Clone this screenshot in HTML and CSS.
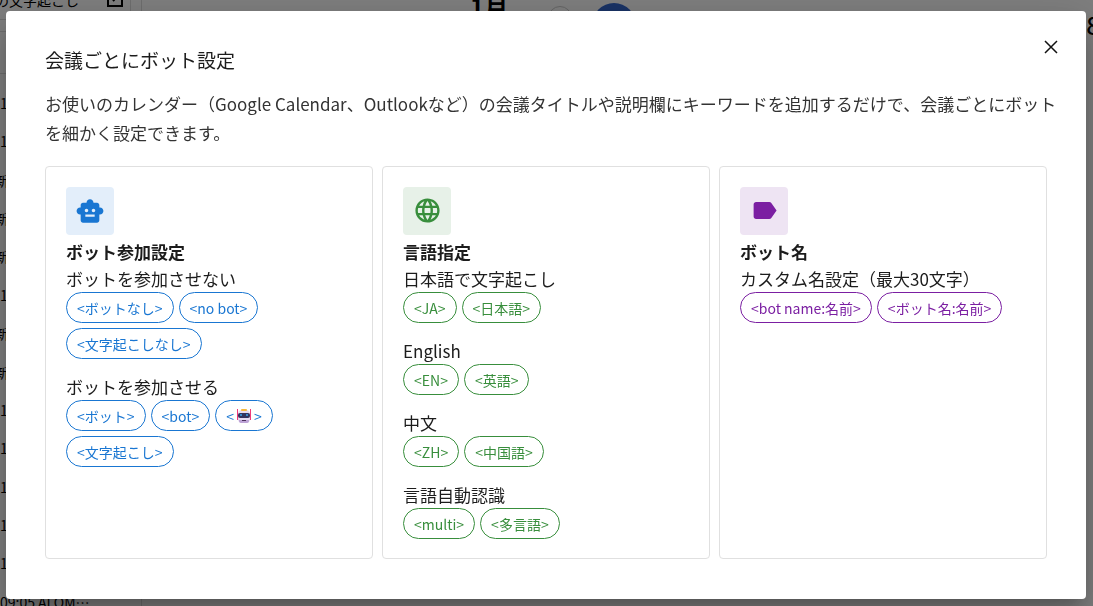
FILE: index.html
```html
<!DOCTYPE html>
<html lang="ja">
<head>
    <meta charset="UTF-8">
    <meta name="viewport" content="width=device-width, initial-scale=1.0">
    <title>会議ごとにボット設定</title>
    <link rel="stylesheet" href="styles.css">
</head>
<body>

<div class="page" aria-hidden="true">
    <aside class="sidebar">
        <div class="sidebar-head">
            <span>の文字起こし</span>
            <svg class="launch" width="16" height="16" viewBox="0 0 16 16"><path d="M8 1H1v14h14V8M6 10l8-9" fill="none" stroke="#000" stroke-width="2"/></svg>
        </div>
        <div class="sidebar-tools"></div>
        <ul class="events">
            <li class="time">1</li>
            <li class="time">1</li>
            <li>新</li>
            <li>新</li>
            <li>新</li>
            <li class="time">1</li>
            <li>新</li>
            <li>新</li>
            <li class="time">1</li>
            <li class="time">1</li>
            <li class="time">1</li>
            <li class="time">1</li>
            <li class="time">1</li>
            <li class="time">09:05 AI OM⋯</li>
        </ul>
    </aside>
    <div class="calendar">
        <div class="month">1月</div>
        <div class="nav-circle"></div>
        <div class="today"></div>
        <div class="day">8</div>
    </div>
</div>

<div class="backdrop">
    <div class="dialog" role="dialog" aria-modal="true" aria-labelledby="dialogTitle">
        <button type="button" class="close" aria-label="閉じる">
            <svg width="14" height="14" viewBox="0 0 14 14"><path d="M1 1l12 12M13 1L1 13" stroke="#111" stroke-width="1.5"/></svg>
        </button>
        <h2 class="title" id="dialogTitle">会議ごとにボット設定</h2>
        <p class="description">お使いのカレンダー（Google Calendar、Outlookなど）の会議タイトルや説明欄にキーワードを追加するだけで、会議ごとにボットを細かく設定できます。</p>

        <div class="cards">
            <section class="card blue">
                <div class="icon">
                    <svg width="28" height="28" viewBox="0 0 24 24"><path fill="currentColor" d="M20.500 9H20V7c0-1.100-.9-2-2-2h-3c0-1.660-1.340-3-3-3S9 3.340 9 5H6c-1.100 0-2 .9-2 2v2h-.5C1.840 9 .5 10.340.5 12s1.340 3 3 3H4v5c0 1.100.9 2 2 2h12c1.100 0 2-.9 2-2v-5h.5c1.660 0 3-1.340 3-3s-1.340-3-3-3zM7.500 11.500c0-.830.670-1.500 1.500-1.500s1.500.670 1.500 1.500S9.830 13 9 13s-1.500-.670-1.500-1.500zM16 17H8v-2h8v2zm-1-4c-.830 0-1.500-.670-1.500-1.500S14.170 10 15 10s1.500.670 1.500 1.500S15.830 13 15 13z"/></svg>
                </div>
                <h3 class="name">ボット参加設定</h3>
                <div class="group">
                    <p class="label">ボットを参加させない</p>
                    <div class="chips">
                        <span class="chip">&lt;ボットなし&gt;</span>
                        <span class="chip">&lt;no bot&gt;</span>
                        <span class="chip">&lt;文字起こしなし&gt;</span>
                    </div>
                </div>
                <div class="group">
                    <p class="label">ボットを参加させる</p>
                    <div class="chips">
                        <span class="chip">&lt;ボット&gt;</span>
                        <span class="chip">&lt;bot&gt;</span>
                        <span class="chip">&lt;<svg class="robot" width="20" height="16" viewBox="0 0 20 16">
                            <path fill="#f0387a" d="M3 1h1v4h1v7H3zM16 1h1v11h-2V5h1z"/>
                            <rect x="4" y="2" width="12" height="13" rx="4" fill="#e6dcf2"/>
                            <path fill="#bda3d6" d="M5 12h10v1q0 2-3 2H8q-3 0-3-2z"/>
                            <rect x="7" y="1" width="6" height="2" rx="1" fill="#f5b93d"/>
                            <rect x="4" y="5" width="12" height="5" rx="2" fill="#33335e"/>
                            <circle cx="7" cy="7" r="1" fill="#38a4ee"/>
                            <circle cx="13" cy="7" r="1" fill="#38a4ee"/>
                            <rect x="8" y="12" width="4" height="1" fill="#4d315c"/>
                        </svg>&gt;</span>
                        <span class="chip">&lt;文字起こし&gt;</span>
                    </div>
                </div>
            </section>

            <section class="card green">
                <div class="icon">
                    <svg width="29" height="29" viewBox="0 0 24 24"><path fill="currentColor" d="M11.990 2C6.470 2 2 6.480 2 12s4.470 10 9.990 10C17.520 22 22 17.520 22 12S17.520 2 11.990 2zm6.930 6h-2.950c-.320-1.250-.780-2.450-1.380-3.560 1.840.630 3.370 1.910 4.330 3.560zM12 4.040c.830 1.200 1.480 2.530 1.910 3.960h-3.820c.430-1.430 1.080-2.760 1.910-3.960zM4.260 14C4.100 13.360 4 12.690 4 12s.1-1.360.260-2h3.380c-.080.660-.140 1.320-.140 2s.060 1.340.140 2H4.260zm.820 2h2.950c.320 1.250.780 2.450 1.380 3.560-1.840-.630-3.370-1.900-4.330-3.560zm2.950-8H5.080c.960-1.660 2.490-2.930 4.330-3.560C8.810 5.550 8.350 6.750 8.030 8zM12 19.960c-.830-1.200-1.480-2.530-1.910-3.960h3.820c-.430 1.430-1.080 2.760-1.910 3.960zM14.340 14H9.660c-.090-.660-.160-1.320-.160-2s.070-1.350.160-2h4.680c.090.650.160 1.320.160 2s-.070 1.340-.160 2zm.250 5.560c.6-1.110 1.060-2.310 1.380-3.560h2.950c-.960 1.650-2.490 2.930-4.330 3.560zM16.360 14c.080-.660.140-1.320.140-2s-.060-1.340-.140-2h3.380c.160.640.260 1.310.260 2s-.1 1.360-.260 2h-3.380z"/></svg>
                </div>
                <h3 class="name">言語指定</h3>
                <div class="group">
                    <p class="label">日本語で文字起こし</p>
                    <div class="chips">
                        <span class="chip">&lt;JA&gt;</span>
                        <span class="chip">&lt;日本語&gt;</span>
                    </div>
                </div>
                <div class="group">
                    <p class="label">English</p>
                    <div class="chips">
                        <span class="chip">&lt;EN&gt;</span>
                        <span class="chip">&lt;英語&gt;</span>
                    </div>
                </div>
                <div class="group">
                    <p class="label">中文</p>
                    <div class="chips">
                        <span class="chip">&lt;ZH&gt;</span>
                        <span class="chip">&lt;中国語&gt;</span>
                    </div>
                </div>
                <div class="group">
                    <p class="label">言語自動認識</p>
                    <div class="chips">
                        <span class="chip">&lt;multi&gt;</span>
                        <span class="chip">&lt;多言語&gt;</span>
                    </div>
                </div>
            </section>

            <section class="card purple">
                <div class="icon">
                    <svg width="29" height="29" viewBox="0 0 24 24"><path fill="currentColor" d="M17.630 5.840C17.270 5.330 16.670 5 16 5L5 5.010C3.900 5.010 3 5.900 3 7v10c0 1.100.9 1.990 2 1.990L16 19c.670 0 1.270-.330 1.630-.840L22 12l-4.370-6.160z"/></svg>
                </div>
                <h3 class="name">ボット名</h3>
                <div class="group">
                    <p class="label">カスタム名設定（最大30文字）</p>
                    <div class="chips">
                        <span class="chip">&lt;bot name:名前&gt;</span>
                        <span class="chip">&lt;ボット名:名前&gt;</span>
                    </div>
                </div>
            </section>
        </div>
    </div>
</div>

</body>
</html>
```
FILE: styles.css
```css
* {
    box-sizing: border-box;
}
body {
    margin: 0;
    height: 100vh;
    overflow: hidden;
    font-family: "Noto Sans CJK JP", sans-serif;
    color: #1c1c1c;
    background-color: #fff;
}
h2, h3, p, ul {
    margin: 0;
    padding: 0;
}

/* calendar page behind the dialog */
.page {
    display: flex;
    height: 100vh;
    overflow: hidden;
    color: #000;
    font-size: 14px;
}
.sidebar {
    flex: none;
    width: 147px;
    margin-left: -5px;
    border-right: 1px solid #ddd;
}
.sidebar-head {
    display: flex;
    justify-content: space-between;
    align-items: center;
    width: 136px;
    height: 40px;
    margin-top: -20px;
    padding-right: 7px;
    border-right: 1px solid #ddd;
    border-bottom: 1px solid #ddd;
}
.launch {
    margin-bottom: 2px;
}
.sidebar-tools {
    height: 43px;
    margin-top: 11px;
    border-top: 1px solid #ddd;
    border-bottom: 1px solid #ddd;
}
.events {
    display: flex;
    flex-direction: column;
    height: 537px;
    margin-top: 10px;
    list-style: none;
}
.events li {
    flex: 1;
    line-height: 38px;
    white-space: nowrap;
}
.events .time {
    padding-left: 5px;
}
.calendar {
    flex: 1;
    display: flex;
    align-items: flex-start;
}
.month {
    margin-left: 328px;
    margin-top: -12px;
    font-size: 24px;
    font-weight: bold;
}
.nav-circle {
    width: 24px;
    height: 24px;
    margin-top: 6px;
    margin-left: 40px;
    border: 1px solid #ccc;
    border-radius: 50%;
}
.today {
    width: 44px;
    height: 44px;
    margin-top: 3px;
    margin-left: 20px;
    border-radius: 50%;
    background-color: #3366cc;
}
.day {
    margin-left: auto;
    margin-right: -7px;
    padding-top: 7px;
    font-size: 24px;
    font-weight: 500;
}

/* dialog */
.backdrop {
    position: fixed;
    inset: 0;
    padding: 11px 7px 7px 6px;
    background-color: rgba(0, 0, 0, 0.5);
}
.dialog {
    position: relative;
    padding: 33px 39px 40px;
    border-radius: 4px;
    background-color: #fff;
    box-shadow: 0 11px 15px -7px rgba(0, 0, 0, 0.2), 0 24px 38px 3px rgba(0, 0, 0, 0.14), 0 9px 46px 8px rgba(0, 0, 0, 0.12);
}
.close {
    position: absolute;
    top: 21px;
    right: 20px;
    display: flex;
    align-items: center;
    justify-content: center;
    width: 30px;
    height: 30px;
    padding: 0;
    border: none;
    background: none;
    cursor: pointer;
}
.title {
    margin-bottom: 13px;
    font-size: 19px;
    font-weight: 400;
    line-height: 32px;
}
.description {
    margin-right: -20px;
    margin-bottom: 19px;
    font-size: 17px;
    line-height: 29px;
    color: #333;
}
.cards {
    display: grid;
    grid-template-columns: repeat(3, 1fr);
    gap: 9px;
}
.card {
    padding: 20px 20px 19px;
    border: 1px solid #e0e0e0;
    border-radius: 4px;
}
.icon {
    display: flex;
    align-items: center;
    justify-content: center;
    width: 48px;
    height: 48px;
    margin-bottom: 3px;
    padding-bottom: 1px;
    border-radius: 4px;
}
.name {
    margin-bottom: 1px;
    font-size: 17px;
    font-weight: 700;
    line-height: 27px;
}
.group + .group {
    margin-top: 15px;
}
.label {
    font-size: 17px;
    line-height: 26px;
}
.chips {
    display: flex;
    flex-wrap: wrap;
    gap: 5px;
}
.chip {
    display: inline-flex;
    align-items: center;
    height: 31px;
    padding: 0 10px;
    border: 1px solid;
    border-radius: 16px;
    font-size: 14px;
    white-space: nowrap;
}
.blue .icon, .blue .chip {
    color: #1976d2;
}
.blue .icon {
    background-color: #e3eefa;
}
.green .icon, .green .chip {
    color: #388e3c;
}
.green .icon {
    background-color: #e7f1e8;
}
.purple .icon, .purple .chip {
    color: #7b1fa2;
}
.purple .icon {
    background-color: #eee4f3;
}
```
